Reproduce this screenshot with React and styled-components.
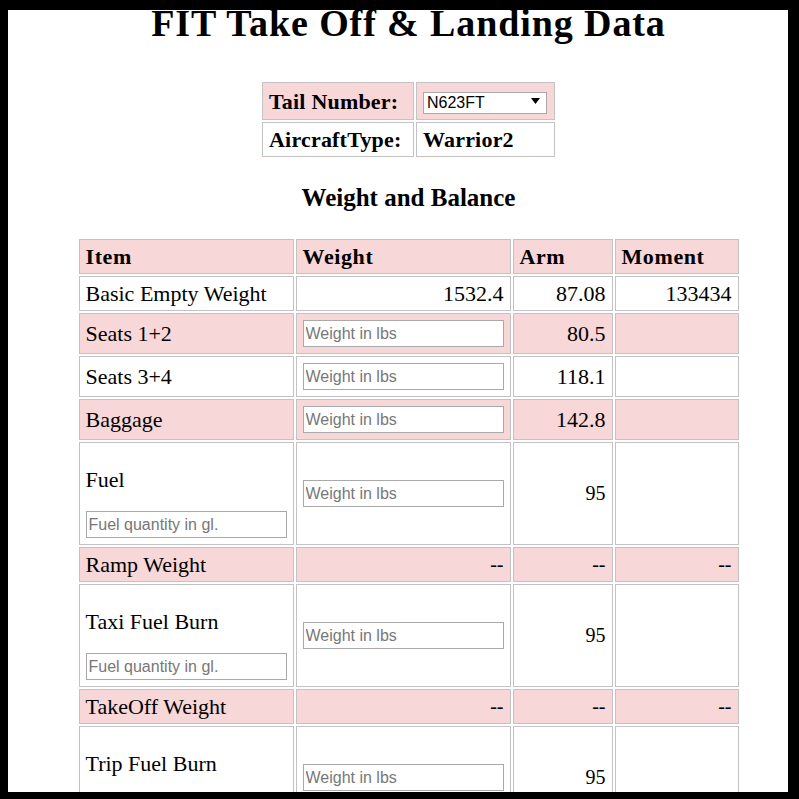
import styled, { createGlobalStyle } from 'styled-components'

const GlobalStyle = createGlobalStyle`
  html, body {
    margin: 0;
    padding: 0;
    background: #000;
  }
  body {
    height: 799px;
    overflow: hidden;
  }
`

const PINK = '#f7d7d8'
const LINE = '#c3c3c3'

const Frame = styled.div`
  margin: 10px 11px 0 8px;
  height: 782px;
  background: #fff;
  overflow: hidden;
`

const Page = styled.div`
  width: 801px;
  display: flex;
  flex-direction: column;
  align-items: center;
  color: #000;
  font-family: "Liberation Serif", "Times New Roman", serif;
`

const Title = styled.h1`
  margin: -1px 0 0;
  font-size: 38px;
  line-height: 28px;
  letter-spacing: 0.9px;
  font-weight: bold;
  white-space: nowrap;
`

const InfoTable = styled.table`
  margin-top: 43px;
  border-spacing: 2px;
  table-layout: fixed;
  width: 297px;
`

const InfoCell = styled.td`
  box-sizing: border-box;
  width: ${p => p.$w}px;
  border: 1px solid ${LINE};
  background: ${p => (p.$pink ? PINK : '#fff')};
  padding: 6px;
  font-size: 22px;
  line-height: 21px;
  font-weight: bold;
  letter-spacing: 0.2px;
  vertical-align: middle;
  white-space: nowrap;
  overflow: hidden;
`

const SelectWrap = styled.div`
  position: relative;
  width: 124px;
  height: 22px;
  margin: 1px 0;
`

const Select = styled.select`
  appearance: none;
  -webkit-appearance: none;
  box-sizing: border-box;
  width: 124px;
  height: 22px;
  border: 1px solid #a9a9a9;
  border-radius: 0;
  background: #fff;
  padding: 0 3px;
  font-family: "Liberation Sans", Arial, sans-serif;
  font-size: 16px;
  color: #000;
  outline: none;
`

const Arrow = styled.svg`
  position: absolute;
  right: 7px;
  top: 8px;
  pointer-events: none;
`

const Heading = styled.h3`
  margin: 26px 0 0;
  font-size: 25px;
  line-height: 26px;
  font-weight: bold;
`

const WbTable = styled.table`
  margin-top: 26px;
  border-spacing: 2px;
  table-layout: fixed;
  width: 664px;
`

const Head = styled.th`
  box-sizing: border-box;
  width: ${p => p.$w}px;
  border: 1px solid ${LINE};
  background: ${PINK};
  padding: 6px;
  font-size: 22px;
  line-height: 21px;
  font-weight: bold;
  letter-spacing: 0.6px;
  text-align: left;
`

const Cell = styled.td`
  box-sizing: border-box;
  border: 1px solid ${LINE};
  background: ${p => (p.$pink ? PINK : '#fff')};
  padding: 6px;
  font-size: ${p => (p.$plain ? '20px' : '22px')};
  line-height: 21px;
  text-align: ${p => (p.$right ? 'right' : 'left')};
  vertical-align: middle;
  white-space: nowrap;
`

const FuelLabel = styled.div`
  margin: 20px 0 21px;
`

const Input = styled.input`
  display: block;
  box-sizing: border-box;
  width: 100%;
  height: 27px;
  margin: 0;
  border: 1px solid #a9a9a9;
  padding: 1px 2px;
  font-family: "Liberation Sans", Arial, sans-serif;
  font-size: 16px;
  background: #fff;
  &::placeholder {
    color: #777;
  }
`

const rows = [
  { item: 'Basic Empty Weight', weight: '1532.4', arm: '87.08', moment: '133434' },
  { item: 'Seats 1+2', input: true, arm: '80.5' },
  { item: 'Seats 3+4', input: true, arm: '118.1' },
  { item: 'Baggage', input: true, arm: '142.8' },
  { item: 'Fuel', input: true, fuel: true, arm: '95', plainArm: true },
  { item: 'Ramp Weight', weight: '--', arm: '--', moment: '--', total: true },
  { item: 'Taxi Fuel Burn', input: true, fuel: true, arm: '95', plainArm: true },
  { item: 'TakeOff Weight', weight: '--', arm: '--', moment: '--', total: true },
  { item: 'Trip Fuel Burn', input: true, fuel: true, arm: '95', plainArm: true },
  { item: 'Landing Weight', weight: '--', arm: '--', moment: '--', total: true },
]

export default function App() {
  return (
    <>
      <GlobalStyle />
      <Frame>
        <Page>
          <Title>FIT Take Off &amp; Landing Data</Title>

          <InfoTable>
            <tbody>
              <tr>
                <InfoCell $w={152} $pink>Tail Number:</InfoCell>
                <InfoCell $w={139} $pink>
                  <SelectWrap>
                    <Select defaultValue="N623FT">
                      <option>N623FT</option>
                    </Select>
                    <Arrow width="9" height="6" viewBox="0 0 9 6">
                      <path d="M0 0 H9 L4.5 6 Z" fill="#000" />
                    </Arrow>
                  </SelectWrap>
                </InfoCell>
              </tr>
              <tr>
                <InfoCell $w={152}>AircraftType:</InfoCell>
                <InfoCell $w={139}>Warrior2</InfoCell>
              </tr>
            </tbody>
          </InfoTable>

          <Heading>Weight and Balance</Heading>

          <WbTable>
            <thead>
              <tr>
                <Head $w={215}>Item</Head>
                <Head $w={215}>Weight</Head>
                <Head $w={100}>Arm</Head>
                <Head $w={124}>Moment</Head>
              </tr>
            </thead>
            <tbody>
              {rows.map((r, i) => {
                const pink = i % 2 === 1
                return (
                  <tr key={r.item}>
                    <Cell $pink={pink}>
                      {r.fuel ? (
                        <>
                          <FuelLabel>{r.item}</FuelLabel>
                          <Input placeholder="Fuel quantity in gl." />
                        </>
                      ) : (
                        r.item
                      )}
                    </Cell>
                    <Cell $pink={pink} $right $plain={r.total}>
                      {r.input ? <Input placeholder="Weight in lbs" /> : r.weight}
                    </Cell>
                    <Cell $pink={pink} $right $plain={r.total || r.plainArm}>
                      {r.arm}
                    </Cell>
                    <Cell $pink={pink} $right $plain={r.total}>
                      {r.moment}
                    </Cell>
                  </tr>
                )
              })}
            </tbody>
          </WbTable>
        </Page>
      </Frame>
    </>
  )
}
